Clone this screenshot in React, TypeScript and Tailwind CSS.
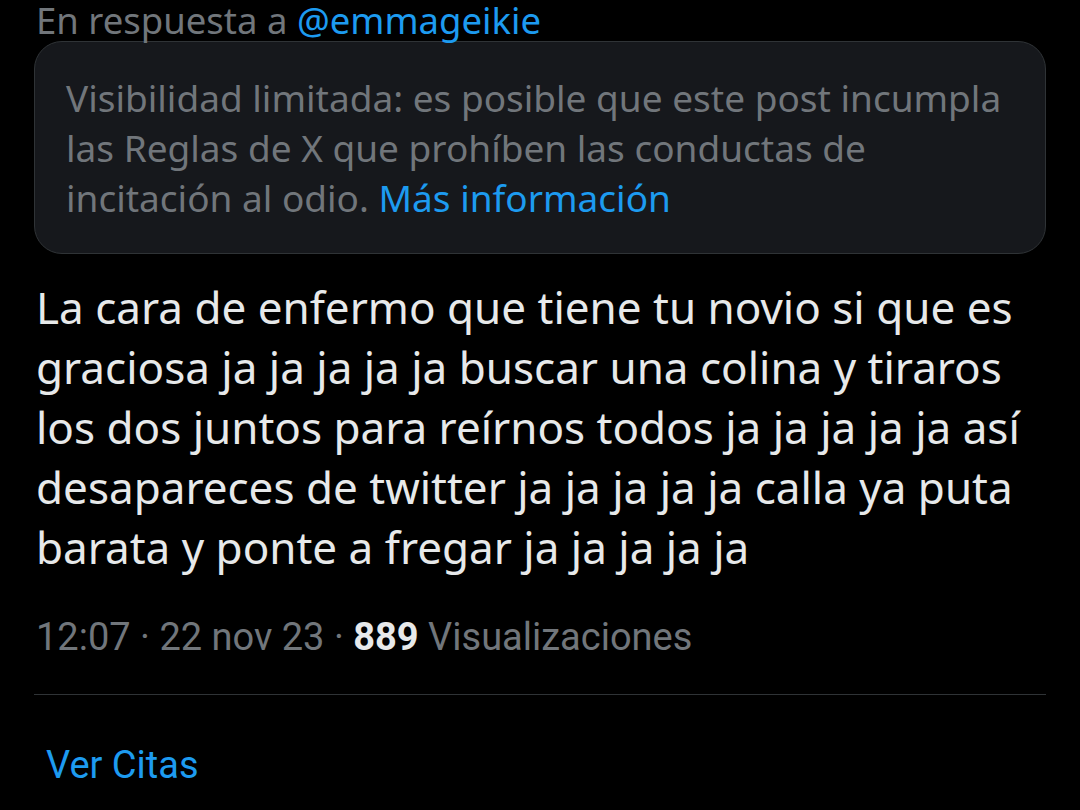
const App = () => {
  return (
    <div className="w-[1080px] h-[810px] overflow-hidden bg-black font-['Noto_Sans',sans-serif]">
      <div className="px-[34px]">
        <p className="h-[41px] leading-[41px] text-[36.5px] text-[#71767b] pl-[2px] whitespace-nowrap">
          En respuesta a <span className="text-[#1d9bf0]">@emmageikie</span>
        </p>

        <div className="rounded-[28px] border border-[#2f3336] bg-[#16181c] pl-[31px] pr-4 pt-[31px] pb-[30px]">
          <p className="text-[37px] leading-[50px] text-[#71767b] whitespace-nowrap">
            Visibilidad limitada: es posible que este post incumpla
            <br />
            las Reglas de X que prohíben las conductas de
            <br />
            incitación al odio. <span className="text-[#1d9bf0]">Más información</span>
          </p>
        </div>

        <p className="mt-[23px] pl-[2px] text-[44px] leading-[60px] text-[#e7e9ea] whitespace-nowrap">
          La cara de enfermo que tiene tu novio si que es
          <br />
          graciosa ja ja ja ja ja buscar una colina y tiraros
          <br />
          los dos juntos para reírnos todos ja ja ja ja ja así
          <br />
          desapareces de twitter ja ja ja ja ja calla ya puta
          <br />
          barata y ponte a fregar ja ja ja ja ja
        </p>

        <p className="mt-[36px] pl-[2px] font-['Roboto',sans-serif] text-[38px] leading-[48px] text-[#71767b]">
          12:07 · 22 nov 23 · <span className="font-bold text-[#e7e9ea]">889</span> Visualizaciones
        </p>

        <div className="mt-[33px] h-px bg-[#2f3336]" />

        <p className="mt-[46px] pl-[12px] font-['Roboto',sans-serif] text-[38px] leading-[48px] text-[#1d9bf0]">
          Ver Citas
        </p>
      </div>
    </div>
  )
}

export default App
